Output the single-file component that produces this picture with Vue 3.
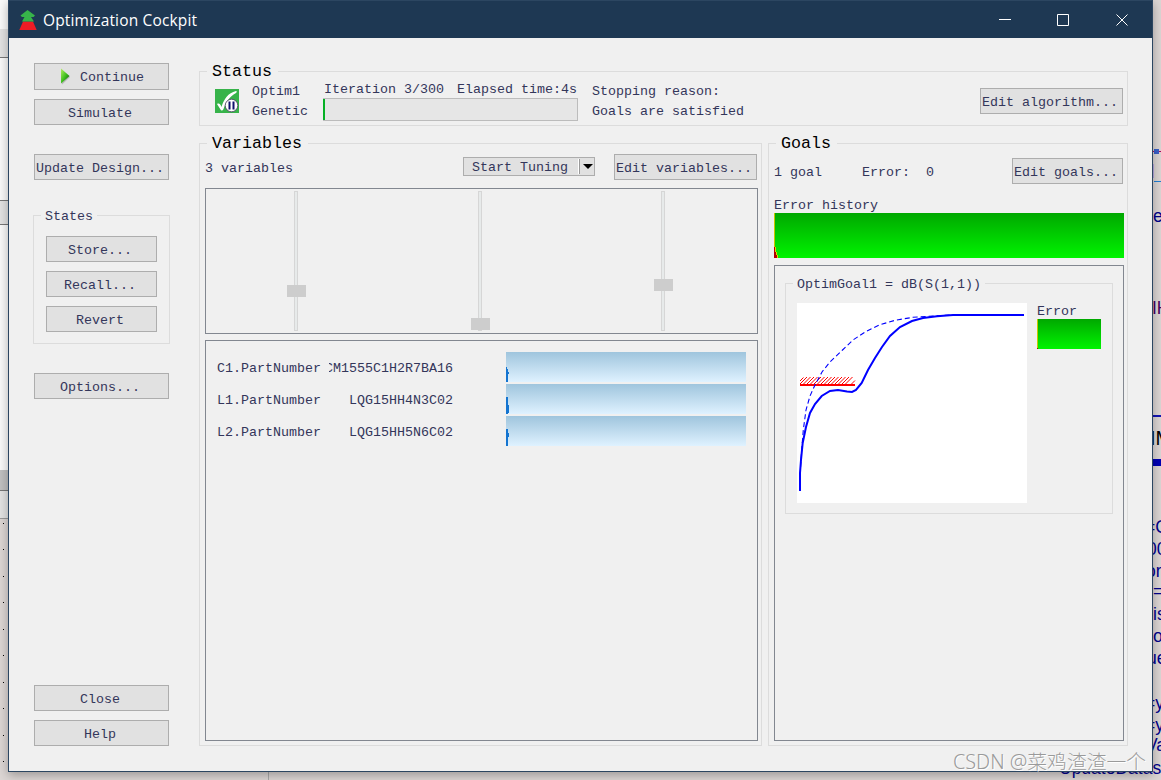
<template>
  <div class="desktop">
    <div class="left-strip">
      <div class="bar bar-top"></div>
      <div class="bar bar-mid"></div>
      <div class="bar bar-scroll"></div>
      <div class="bar bar-low"></div>
      <div class="grid-area"></div>
      <i v-for="y in dots" :key="y" class="dot" :style="{ top: y + 'px' }"></i>
    </div>
    <i class="bottom-line"></i>
    <svg class="schematic" width="8" height="780" viewBox="0 0 8 780" shape-rendering="crispEdges">
      <rect x="0" y="151" width="8" height="1" fill="#b00060" />
      <rect x="1" y="149" width="5" height="5" fill="#3a5fc8" />
      <rect x="0" y="164" width="1" height="14" fill="#b9a8e0" />
      <rect x="1" y="181" width="7" height="1" fill="#2080d8" />
      <rect x="0" y="415" width="8" height="2" fill="#1414b4" />
      <rect x="0" y="459" width="8" height="7" fill="#0000b4" />
    </svg>
    <span
      v-for="(w, i) in words"
      :key="i"
      class="word"
      :class="w.cls"
      :style="{ left: w.x + 'px', top: w.y + 'px' }"
    >{{ w.text }}</span>

    <div class="window">
      <div class="titlebar">
        <svg class="app-icon" width="18" height="20" viewBox="0 0 18 20">
          <path d="M4 11.500h10L17.700 20H.3z" fill="#ee1c25" />
          <path d="M8.500 0l7.500 5.500-1.500 1.500H12l3 4.500H3L5.500 7H3L1.500 5.500z" fill="#37b34a" />
        </svg>
        <span class="title">Optimization Cockpit</span>
        <svg class="controls" width="130" height="14" viewBox="0 0 130 14" fill="none" stroke="#fff" stroke-width="1">
          <path d="M0 6.500h12" />
          <path d="M58.500 1.500h11v11h-11z" />
          <path d="M117.500 1.500l11 11M128.500 1.500l-11 11" />
        </svg>
      </div>

      <div class="body">
        <div class="side">
          <button class="btn continue">
            <svg width="11" height="17" viewBox="0 0 11 17">
              <defs>
                <linearGradient id="play" x1="0" y1="0" x2="1" y2="1">
                  <stop offset="0" stop-color="#b4f060" />
                  <stop offset="0.5" stop-color="#40c020" />
                  <stop offset="1" stop-color="#084808" />
                </linearGradient>
              </defs>
              <path d="M2 2.500l8 6.500-8 7.500z" fill="#999" opacity="0.6" />
              <path d="M1 .5l8.500 7.500L1 15.500z" fill="url(#play)" />
            </svg>
            <span>Continue</span>
          </button>
          <button class="btn simulate">Simulate</button>
          <button class="btn update">Update Design...</button>
          <div class="group states">
            <span class="legend small">States</span>
            <button class="btn">Store...</button>
            <button class="btn">Recall...</button>
            <button class="btn">Revert</button>
          </div>
          <button class="btn">Options...</button>
          <button class="btn close">Close</button>
          <button class="btn help">Help</button>
        </div>

        <div class="main">
          <div class="group status">
            <span class="legend">Status</span>
            <svg class="status-icon" width="24" height="24" viewBox="0 0 24 24">
              <rect width="24" height="24" fill="#37b34a" />
              <path d="M2 15c2-1 3-.5 4.500 3C9 10 13 4 21 2c1 0 1 1 0 2C14 8 11 13 8.500 20c-1 2-2.500 2-3 .5z" fill="#fff" />
              <circle cx="16.500" cy="16.500" r="6.300" fill="#fff" stroke="#4a3a5c" stroke-width="0.8" />
              <path d="M13.500 12.500h2v8h-2zM17.500 12.500h2v8h-2z" fill="#10106c" />
            </svg>
            <div class="lines names"><span>Optim1</span><span>Genetic</span></div>
            <div class="progress-col">
              <div class="progress-text"><span>Iteration 3/300</span><span>Elapsed time:4s</span></div>
              <div class="progress"><div class="fill" :style="{ width: (iteration / 300) * 100 + '%' }"></div></div>
            </div>
            <div class="lines reason"><span>Stopping reason:</span><span>Goals are satisfied</span></div>
            <button class="btn algorithm">Edit algorithm...</button>
          </div>

          <div class="panels">
            <div class="group variables">
              <span class="legend">Variables</span>
              <div class="var-bar">
                <span class="count">3 variables</span>
                <div class="tuning">
                  <span>Start Tuning</span>
                  <i class="sep"></i>
                  <svg width="10" height="5" viewBox="0 0 10 5"><path d="M0 0h10L5 5z" /></svg>
                </div>
                <button class="btn">Edit variables...</button>
              </div>
              <div class="sliders">
                <div v-for="(s, i) in sliders" :key="i" class="slider">
                  <div class="thumb" :style="{ top: s + 'px' }"></div>
                </div>
              </div>
              <div class="var-list">
                <div v-for="v in variables" :key="v.name" class="var-row">
                  <span class="name">{{ v.name }}</span>
                  <span class="value"><span>{{ v.value }}</span></span>
                  <svg class="hist" width="240" height="30" viewBox="0 0 240 30" shape-rendering="crispEdges">
                    <rect
                      v-for="(t, i) in v.ticks"
                      :key="i"
                      :x="i"
                      :y="t[0]"
                      width="1"
                      :height="t[1] - t[0]"
                      fill="#1474d0"
                    />
                  </svg>
                </div>
              </div>
            </div>

            <div class="group goals">
              <span class="legend">Goals</span>
              <div class="goal-bar">
                <span class="goal-count">1 goal</span>
                <span class="goal-error">Error:</span>
                <span>0</span>
                <button class="btn">Edit goals...</button>
              </div>
              <div class="history-label">Error history</div>
              <svg class="green history" width="350" height="45" viewBox="0 0 350 45" shape-rendering="crispEdges">
                <rect width="1" height="45" fill="#c8c800" />
                <path d="M1 34h1v5h1v3h1v3H0V34z" fill="#e0d000" />
                <path d="M0 34h1v5h1v3h1v3H0z" fill="#b00000" />
              </svg>
              <div class="goal-list">
                <div class="group goal">
                  <span class="legend small">OptimGoal1 = dB(S(1,1))</span>
                  <svg class="plot" width="230" height="200" viewBox="0 0 230 200">
                    <path class="hatch" :d="hatch" />
                    <path class="limit" d="M3 82h55" />
                    <polyline class="curve initial" :points="initial" />
                    <polyline class="curve" :points="current" />
                  </svg>
                  <div class="goal-side">
                    <span>Error</span>
                    <svg class="green" width="64" height="30" viewBox="0 0 64 30" shape-rendering="crispEdges">
                      <rect width="1" height="29" fill="#c8c800" />
                      <rect y="29" width="1" height="1" fill="#b00000" />
                    </svg>
                  </div>
                </div>
              </div>
            </div>
          </div>
        </div>
      </div>
    </div>
    <div class="watermark">CSDN @菜鸡渣渣一个</div>
  </div>
</template>

<script setup>
import { ref } from "vue";

const iteration = ref(3);
const sliders = ref([94, 127, 88]);

// ticks: [top, bottom] of each one pixel column
const variables = ref([
  { name: 'C1.PartNumber', value: 'CM1555C1H2R7BA16', ticks: [[15, 30], [17, 30], [20, 22]] },
  { name: 'L1.PartNumber', value: 'LQG15HH4N3C02', ticks: [[13, 30], [13, 30], [21, 29]] },
  { name: 'L2.PartNumber', value: 'LQG15HH5N6C02', ticks: [[13, 30], [13, 30], [17, 21]] }
]);

const current = '3,188 3,170 4,157 5.7,140 9,124 13,110 18,101 24.7,93 33,88 41,87 50,88.5 55,89 59,87 64.7,80 71,67 78,55 85,44 93,33 103,24 115,18 126,15 140,13.3 156,12 227,12';
const initial = '3,188 3.5,165 4.7,147 6.3,127 9,107 13,93 18,82 25,69 33,59 45,47.5 56,37 68,29 83,21.7 98,17.3 116,14.3 140,12.7 156,12';

let hatch = 'M3 78l3.500-3.500';
for (let x = 3; x < 52; x += 3.5) {
  hatch += `M${x} 81l7-7`;
}
hatch += 'M54.500 81l3.500-3.500';

const dots = [523, 549, 576, 602, 629, 655, 682, 708, 735, 761];

const words = [
  { text: 'e', x: 1153, y: 206 },
  { text: 'IH', x: 1152, y: 298, cls: 'purple' },
  { text: 'IM', x: 1150, y: 428, cls: 'black' },
  { text: '=C', x: 1145, y: 517 },
  { text: '00', x: 1147, y: 539 },
  { text: 'or', x: 1146, y: 561 },
  { text: '=', x: 1153, y: 581 },
  { text: 'is', x: 1153, y: 604 },
  { text: 'or', x: 1153, y: 626 },
  { text: 'ue', x: 1147, y: 648 },
  { text: '=y', x: 1145, y: 693 },
  { text: '=y', x: 1145, y: 715 },
  { text: 'Va', x: 1146, y: 735 },
  { text: 'UpdateDatas', x: 1059, y: 758 }
];
</script>

<style>
body {
  overflow: hidden;
}
</style>

<style scoped>
.desktop {
  position: relative;
  width: 1161px;
  height: 780px;
  overflow: hidden;
  background: #dcd6d4;
  font-family: "Liberation Mono", "Noto Sans CJK SC", monospace;
  font-size: 13.33px;
  line-height: 16px;
  color: #33365a;
}
.desktop * {
  box-sizing: border-box;
}
svg {
  display: block;
  flex: none;
}
.left-strip {
  position: absolute;
  left: 0;
  top: 0;
  width: 8px;
  height: 780px;
  background: #fafafa;
}
.bar {
  position: absolute;
  left: 0;
  width: 8px;
  background: #e3e3e3;
  border-bottom: 1px solid #777;
}
.bar-top {
  top: 29px;
  height: 29px;
}
.bar-mid {
  top: 200px;
  height: 25px;
  border-top: 1px solid #777;
}
.bar-scroll {
  top: 470px;
  height: 21px;
  background: #c0c0c0;
}
.bar-low {
  top: 491px;
  height: 28px;
  border-color: #999;
}
.grid-area {
  position: absolute;
  top: 519px;
  left: 0;
  width: 8px;
  height: 261px;
  background: #dcd6d4;
}
.dot {
  position: absolute;
  left: 3px;
  width: 1px;
  height: 1px;
  background: #000;
}
.bottom-line {
  position: absolute;
  left: 268px;
  top: 770px;
  width: 1px;
  height: 10px;
  background: #aaa;
}
.schematic {
  position: absolute;
  left: 1153px;
  top: 0;
}
.word {
  position: absolute;
  font-family: "Liberation Sans", sans-serif;
  font-size: 17.5px;
  line-height: 20px;
  color: #00008c;
  white-space: nowrap;
}
.word.purple {
  color: #4a0060;
}
.word.black {
  color: #000;
  font-size: 20px;
}

.window {
  position: absolute;
  left: 8px;
  top: 0;
  width: 1145px;
  height: 772px;
  display: flex;
  flex-direction: column;
  background: #f0f0f0;
  border: 1px solid #2c4661;
  box-shadow: 0 3px 10px rgba(0, 0, 0, 0.3);
}
.titlebar {
  height: 37px;
  display: flex;
  align-items: center;
  padding: 0 23px 0 10px;
  background: #1e3853;
  color: #fff;
}
.title {
  margin-left: 6px;
  font-family: "Open Sans", "Noto Sans", sans-serif;
  font-size: 15.5px;
  line-height: 20px;
  letter-spacing: 0.16px;
}
.controls {
  margin-left: auto;
}
.body {
  flex: 1;
  display: flex;
  gap: 29px;
  padding: 25px 24px;
}

.btn {
  display: flex;
  align-items: center;
  justify-content: center;
  height: 26px;
  padding: 3px 3px 0 0;
  margin: 0;
  border: 1px solid #adadad;
  border-radius: 0;
  background: #e1e1e1;
  font: inherit;
  color: inherit;
  white-space: pre;
  flex: none;
}
.group {
  position: relative;
  border: 1px solid #dcdcdc;
}
.legend {
  position: absolute;
  left: 7px;
  top: -11px;
  padding: 0 6px 0 5px;
  background: #f0f0f0;
  font-size: 16.67px;
  line-height: 22px;
  color: #000;
  white-space: pre;
}
.legend.small {
  top: -10px;
  padding: 0 4px 0 4px;
  font-size: 13.33px;
  color: inherit;
}

.side {
  width: 137px;
  display: flex;
  flex-direction: column;
}
.side > .btn {
  margin-left: 1px;
  margin-right: 1px;
}
.side > .continue {
  height: 27px;
  gap: 9px;
  padding-right: 0;
  padding-left: 1px;
}
.continue svg {
  margin-top: -4px;
}
.side > .simulate {
  margin-top: 9px;
}
.side > .update {
  margin-top: 29px;
}
.states {
  height: 129px;
  margin: 35px 0 29px;
  padding: 20px 12px 0;
  display: flex;
  flex-direction: column;
  gap: 9px;
}
.side > .close {
  margin-top: auto;
}
.side > .help {
  margin-top: 9px;
}

.main {
  flex: 1;
  min-width: 0;
  padding-top: 8px;
  display: flex;
  flex-direction: column;
  gap: 17px;
}
.status {
  height: 55px;
  display: flex;
  align-items: flex-start;
  padding: 9px 4px 0 15px;
  white-space: pre;
}
.status-icon {
  margin-top: 8px;
}
.lines {
  display: flex;
  flex-direction: column;
  padding-top: 1px;
  line-height: 20px;
}
.names {
  width: 84px;
  padding-left: 13px;
}
.progress-col {
  width: 255px;
}
.progress-text {
  display: flex;
  justify-content: space-between;
  padding: 1px 1px 0;
  height: 17px;
  line-height: 16px;
}
.progress {
  height: 23px;
  border: 1px solid #bcbcbc;
  border-left: 0;
  background: #e6e6e6;
}
.fill {
  height: 100%;
  min-width: 2px;
  max-width: 2px;
  background: #06b025;
}
.reason {
  margin-left: 14px;
}
.algorithm {
  width: 143px;
  margin: 7px 0 0 auto;
}

.panels {
  flex: 1;
  display: flex;
  gap: 6px;
}
.variables {
  width: 563px;
  padding: 10px 3px 4px 5px;
  display: flex;
  flex-direction: column;
}
.var-bar {
  display: flex;
  align-items: center;
  height: 26px;
}
.var-bar .count {
  margin-top: 3px;
}
.var-bar .btn {
  width: 143px;
  margin-left: 19px;
  margin-right: 1px;
}
.tuning {
  width: 132px;
  height: 19px;
  margin-left: auto;
  margin-top: -1px;
  display: flex;
  align-items: center;
  padding-left: 8px;
  border: 1px solid #adadad;
  background: #e1e1e1;
  white-space: pre;
}
.tuning span {
  margin-top: 3px;
}
.sep {
  width: 2px;
  height: 15px;
  margin: 0 3px 0 10px;
  border-left: 1px solid #fff;
  border-right: 1px solid #999;
}
.sliders {
  height: 146px;
  margin-top: 8px;
  padding: 2px 92px 0 88px;
  display: flex;
  justify-content: space-between;
  border: 1px solid #828790;
}
.slider {
  position: relative;
  width: 4px;
  height: 140px;
  border: 1px solid #d6d6d6;
  background: #e7eaea;
}
.thumb {
  position: absolute;
  left: -8px;
  margin-top: -1px;
  width: 19px;
  height: 12px;
  background: #cdcdcd;
}
.var-list {
  flex: 1;
  margin-top: 6px;
  padding: 11px 11px 0;
  display: flex;
  flex-direction: column;
  gap: 2px;
  border: 1px solid #828790;
}
.var-row {
  display: flex;
  align-items: center;
  height: 30px;
}
.name {
  width: 112px;
  margin-top: 3px;
}
.value {
  width: 124px;
  margin-top: 3px;
  display: flex;
  justify-content: flex-end;
  overflow: hidden;
  white-space: pre;
}
.hist {
  margin-left: auto;
  background: linear-gradient(#9fc5dd, #dff2ff);
}

.goals {
  flex: 1;
  min-width: 0;
  padding: 14px 3px 4px 5px;
  display: flex;
  flex-direction: column;
}
.goal-bar {
  display: flex;
  align-items: center;
  height: 26px;
  white-space: pre;
}
.goal-bar span {
  margin-top: 3px;
}
.goal-count {
  width: 88px;
}
.goal-error {
  width: 64px;
}
.goal-bar .btn {
  width: 111px;
  margin-left: auto;
  margin-right: 1px;
}
.history-label {
  height: 29px;
  padding-top: 14px;
}
.green {
  background: linear-gradient(#00a800, #00f400);
}
.goal-list {
  flex: 1;
  margin-top: 7px;
  padding: 17px 10px 0;
  border: 1px solid #828790;
}
.goal {
  height: 231px;
  display: flex;
  gap: 10px;
  padding: 19px 11px 0;
}
.plot {
  background: #fff;
  fill: none;
}
.hatch {
  stroke: #ff0000;
  stroke-width: 1;
}
.limit {
  stroke: #ff0000;
  stroke-width: 2;
}
.curve {
  stroke: #0000ff;
  stroke-width: 2;
}
.curve.initial {
  stroke-width: 1.1;
  stroke-dasharray: 5 3;
}
.goal-side {
  display: flex;
  flex-direction: column;
}
.goal-side span {
  height: 16px;
  padding-top: 1px;
}

.watermark {
  position: absolute;
  left: 953px;
  top: 748px;
  font-family: "Noto Sans", "Noto Sans CJK SC", sans-serif;
  font-size: 19.8px;
  line-height: 28px;
  font-weight: 300;
  color: #9a9a9a;
  text-shadow: 1px 1px 0 #fff;
  white-space: nowrap;
}
</style>
